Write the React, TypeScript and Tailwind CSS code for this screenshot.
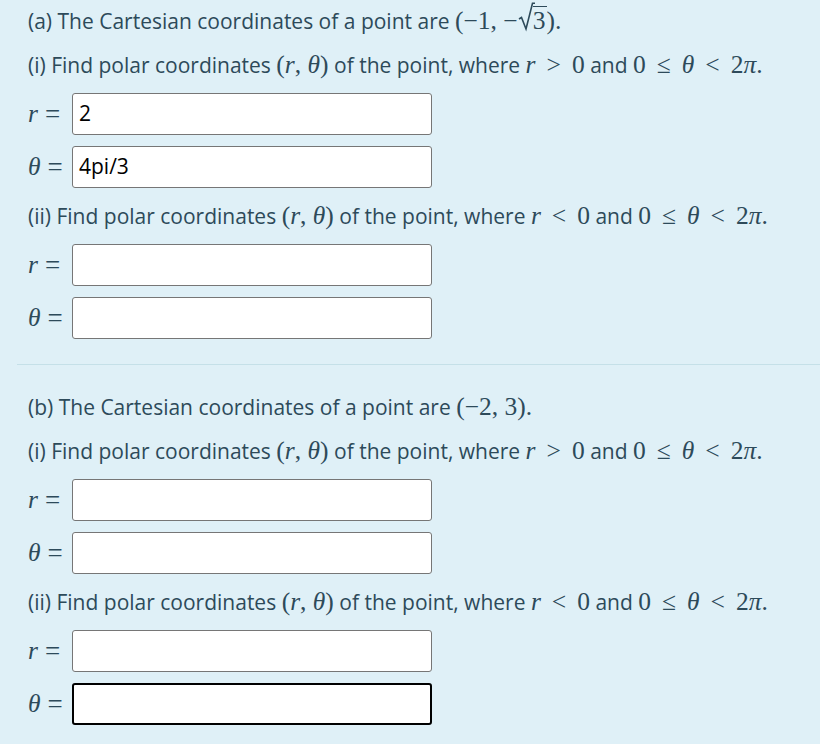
import React from "react";

const M = ({ children }: { children: React.ReactNode }) => (
  <span className="font-['Liberation_Serif',serif] text-[25.5px] leading-none">{children}</span>
);
const I = ({ children }: { children: React.ReactNode }) => (
  <span className="italic font-['Liberation_Serif',serif] text-[25.5px] leading-none">{children}</span>
);
const R = ({ children }: { children: React.ReactNode }) => (
  <span className="font-['Liberation_Serif',serif] text-[25.5px] leading-none mx-[11px]">{children}</span>
);

function Sqrt3() {
  return (
    <span className="relative inline-block pl-[15px] leading-none">
      <svg width="17" height="30" viewBox="0 0 17 30" className="absolute left-0 -top-[4px]">
        <path d="M1 17 L3.5 15.5 L8 27 L14.5 1.2 L17 1.2" fill="none" stroke="#2d4a5a" strokeWidth="1.6" />
      </svg>
      <span className="inline-block border-t-[1.6px] border-[#2d4a5a] pr-[1px] pt-[1px]">3</span>
    </span>
  );
}

function Field({ label, value, focused }: { label: React.ReactNode; value?: string; focused?: boolean }) {
  return (
    <div className="flex items-center h-[42px]">
      <div className="w-[44px] flex items-center text-[#2d4a5a] whitespace-nowrap">
        {label}
      </div>
      <div
        className={
          "w-[360px] h-[42px] bg-white rounded-[3px] flex items-center pl-[6px] text-[21px] text-black " +
          (focused ? "border-2 border-black" : "border border-[#767676]")
        }
      >
        {value}
      </div>
    </div>
  );
}

const Eq = () => <span className="font-['Liberation_Serif',serif] text-[27px] leading-none ml-[7px]">=</span>;

function Cond({ sign }: { sign: string }) {
  return (
    <>
      , where <I>r</I>
      <R>{sign}</R>
      <M>0</M> and <M>0</M>
      <R>≤</R>
      <I>θ</I>
      <R>&lt;</R>
      <M>2</M>
      <I>π</I>
      <M>.</M>
    </>
  );
}

function Part({ roman, sign, v1, v2, focused, first }: { roman: string; sign: string; v1?: string; v2?: string; focused?: boolean; first?: boolean }) {
  return (
    <>
      <p className={"h-[45px] flex items-center " + (first ? "" : "mt-[6px]")}>
        <span>
          ({roman}) Find polar coordinates <M>(</M><I>r</I><M>,&nbsp;</M><I>θ</I><M>)</M> of the point<Cond sign={sign} />
        </span>
      </p>
      <div className="flex flex-col gap-[11px] mt-[5px]">
        <Field label={<><I>r</I><Eq /></>} value={v1} />
        <Field label={<><I>θ</I><Eq /></>} value={v2} focused={focused} />
      </div>
    </>
  );
}

export default function App() {
  return (
    <div className="w-[820px] h-[744px] bg-[#dff0f7] text-[#2d4a5a] font-['Open_Sans',sans-serif] text-[21px] overflow-hidden">
      <div className="pl-[28px] pt-[1px]">
        <p className="h-[42px] flex items-center">
          <span>
            (a) The Cartesian coordinates of a point are <M>(−1,&nbsp;−</M>
            <M><Sqrt3 /></M>
            <M>).</M>
          </span>
        </p>
        <Part roman="i" sign=">" v1="2" v2="4pi/3" first />
        <Part roman="ii" sign="<" />
      </div>
      <div className="ml-[17px] mt-[25px] border-t border-[#c5e0e8] h-0" />
      <div className="pl-[28px] pt-[22px]">
        <p className="h-[42px] flex items-center">
          <span>
            (b) The Cartesian coordinates of a point are <M>(−2,&nbsp;3).</M>
          </span>
        </p>
        <Part roman="i" sign=">" first />
        <Part roman="ii" sign="<" focused />
      </div>
    </div>
  );
}
